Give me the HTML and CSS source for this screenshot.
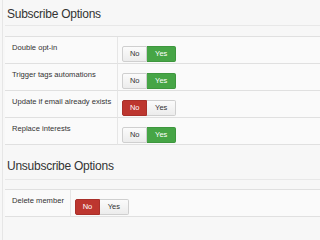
FILE: index.html
```html
<!DOCTYPE html>
<html>
<head>
<meta charset="utf-8">
<link rel="stylesheet" href="styles.css">
</head>
<body>
<div class="page">
  <div class="legend first">Subscribe Options</div>
  <div class="opts">
    <div class="lbl">Double opt-in</div>
    <div class="ctl"><div class="grp"><span class="btn no">No</span><span class="btn yes on-yes">Yes</span></div></div>
    <div class="lbl">Trigger tags automations</div>
    <div class="ctl"><div class="grp"><span class="btn no">No</span><span class="btn yes on-yes">Yes</span></div></div>
    <div class="lbl">Update if email already exists</div>
    <div class="ctl"><div class="grp"><span class="btn no on-no">No</span><span class="btn yes">Yes</span></div></div>
    <div class="lbl">Replace interests</div>
    <div class="ctl"><div class="grp"><span class="btn no">No</span><span class="btn yes on-yes">Yes</span></div></div>
  </div>
  <div class="legend second">Unsubscribe Options</div>
  <div class="opts">
    <div class="lbl">Delete member</div>
    <div class="ctl"><div class="grp"><span class="btn no on-no">No</span><span class="btn yes">Yes</span></div></div>
  </div>
</div>
</body>
</html>
```
FILE: styles.css
```css
html, body {
  margin: 0;
  padding: 0;
  background: #f7f7f7;
}
body {
  font-family: "Liberation Sans", Arial, sans-serif;
  color: #333;
}
.page {
  margin-left: 2px;
  border-left: 1px solid #e6e6e6;
  padding-left: 2px;
  min-height: 100vh;
  box-sizing: border-box;
}
.legend {
  font-size: 12px;
  letter-spacing: -0.25px;
  line-height: 15px;
  padding-left: 2px;
  color: #333;
  border-bottom: 1px solid #e8e8e8;
}
.legend.first {
  padding-top: 7px;
  padding-bottom: 3px;
  margin-bottom: 10px;
}
.legend.second {
  margin-top: 14px;
  padding-bottom: 5px;
  margin-bottom: 9px;
}
.opts {
  display: grid;
  grid-template-columns: max-content 1fr;
  border-top: 1px solid #e0e0e0;
  background: #fafafa;
}
.lbl, .ctl {
  border-bottom: 1px solid #e0e0e0;
  box-sizing: content-box;
}
.lbl {
  font-size: 7.6px;
  line-height: 10px;
  padding: 6px 6px 0 7px;
  height: 20px;
  border-right: 1px solid #e6e6e6;
}
.ctl {
  padding: 5px 0 0 4px;
  height: 21px;
}
.grp {
  display: inline-flex;
  height: 16px;
}
.btn {
  display: flex;
  align-items: center;
  justify-content: center;
  box-sizing: border-box;
  height: 16px;
  font-size: 7.5px;
  color: #333;
  background: linear-gradient(#fbfbfb, #ececec);
  border: 1px solid #cfcfcf;
}
.btn.no {
  width: 25px;
  border-radius: 2px 0 0 2px;
}
.btn.yes {
  width: 29px;
  border-left: none;
  border-radius: 0 2px 2px 0;
}
.btn.on-yes {
  background: #46a546;
  border-color: #3e963e;
  color: #fff;
}
.btn.on-no {
  background: #bd362f;
  border-color: #a8302a;
  color: #fff;
}
```
